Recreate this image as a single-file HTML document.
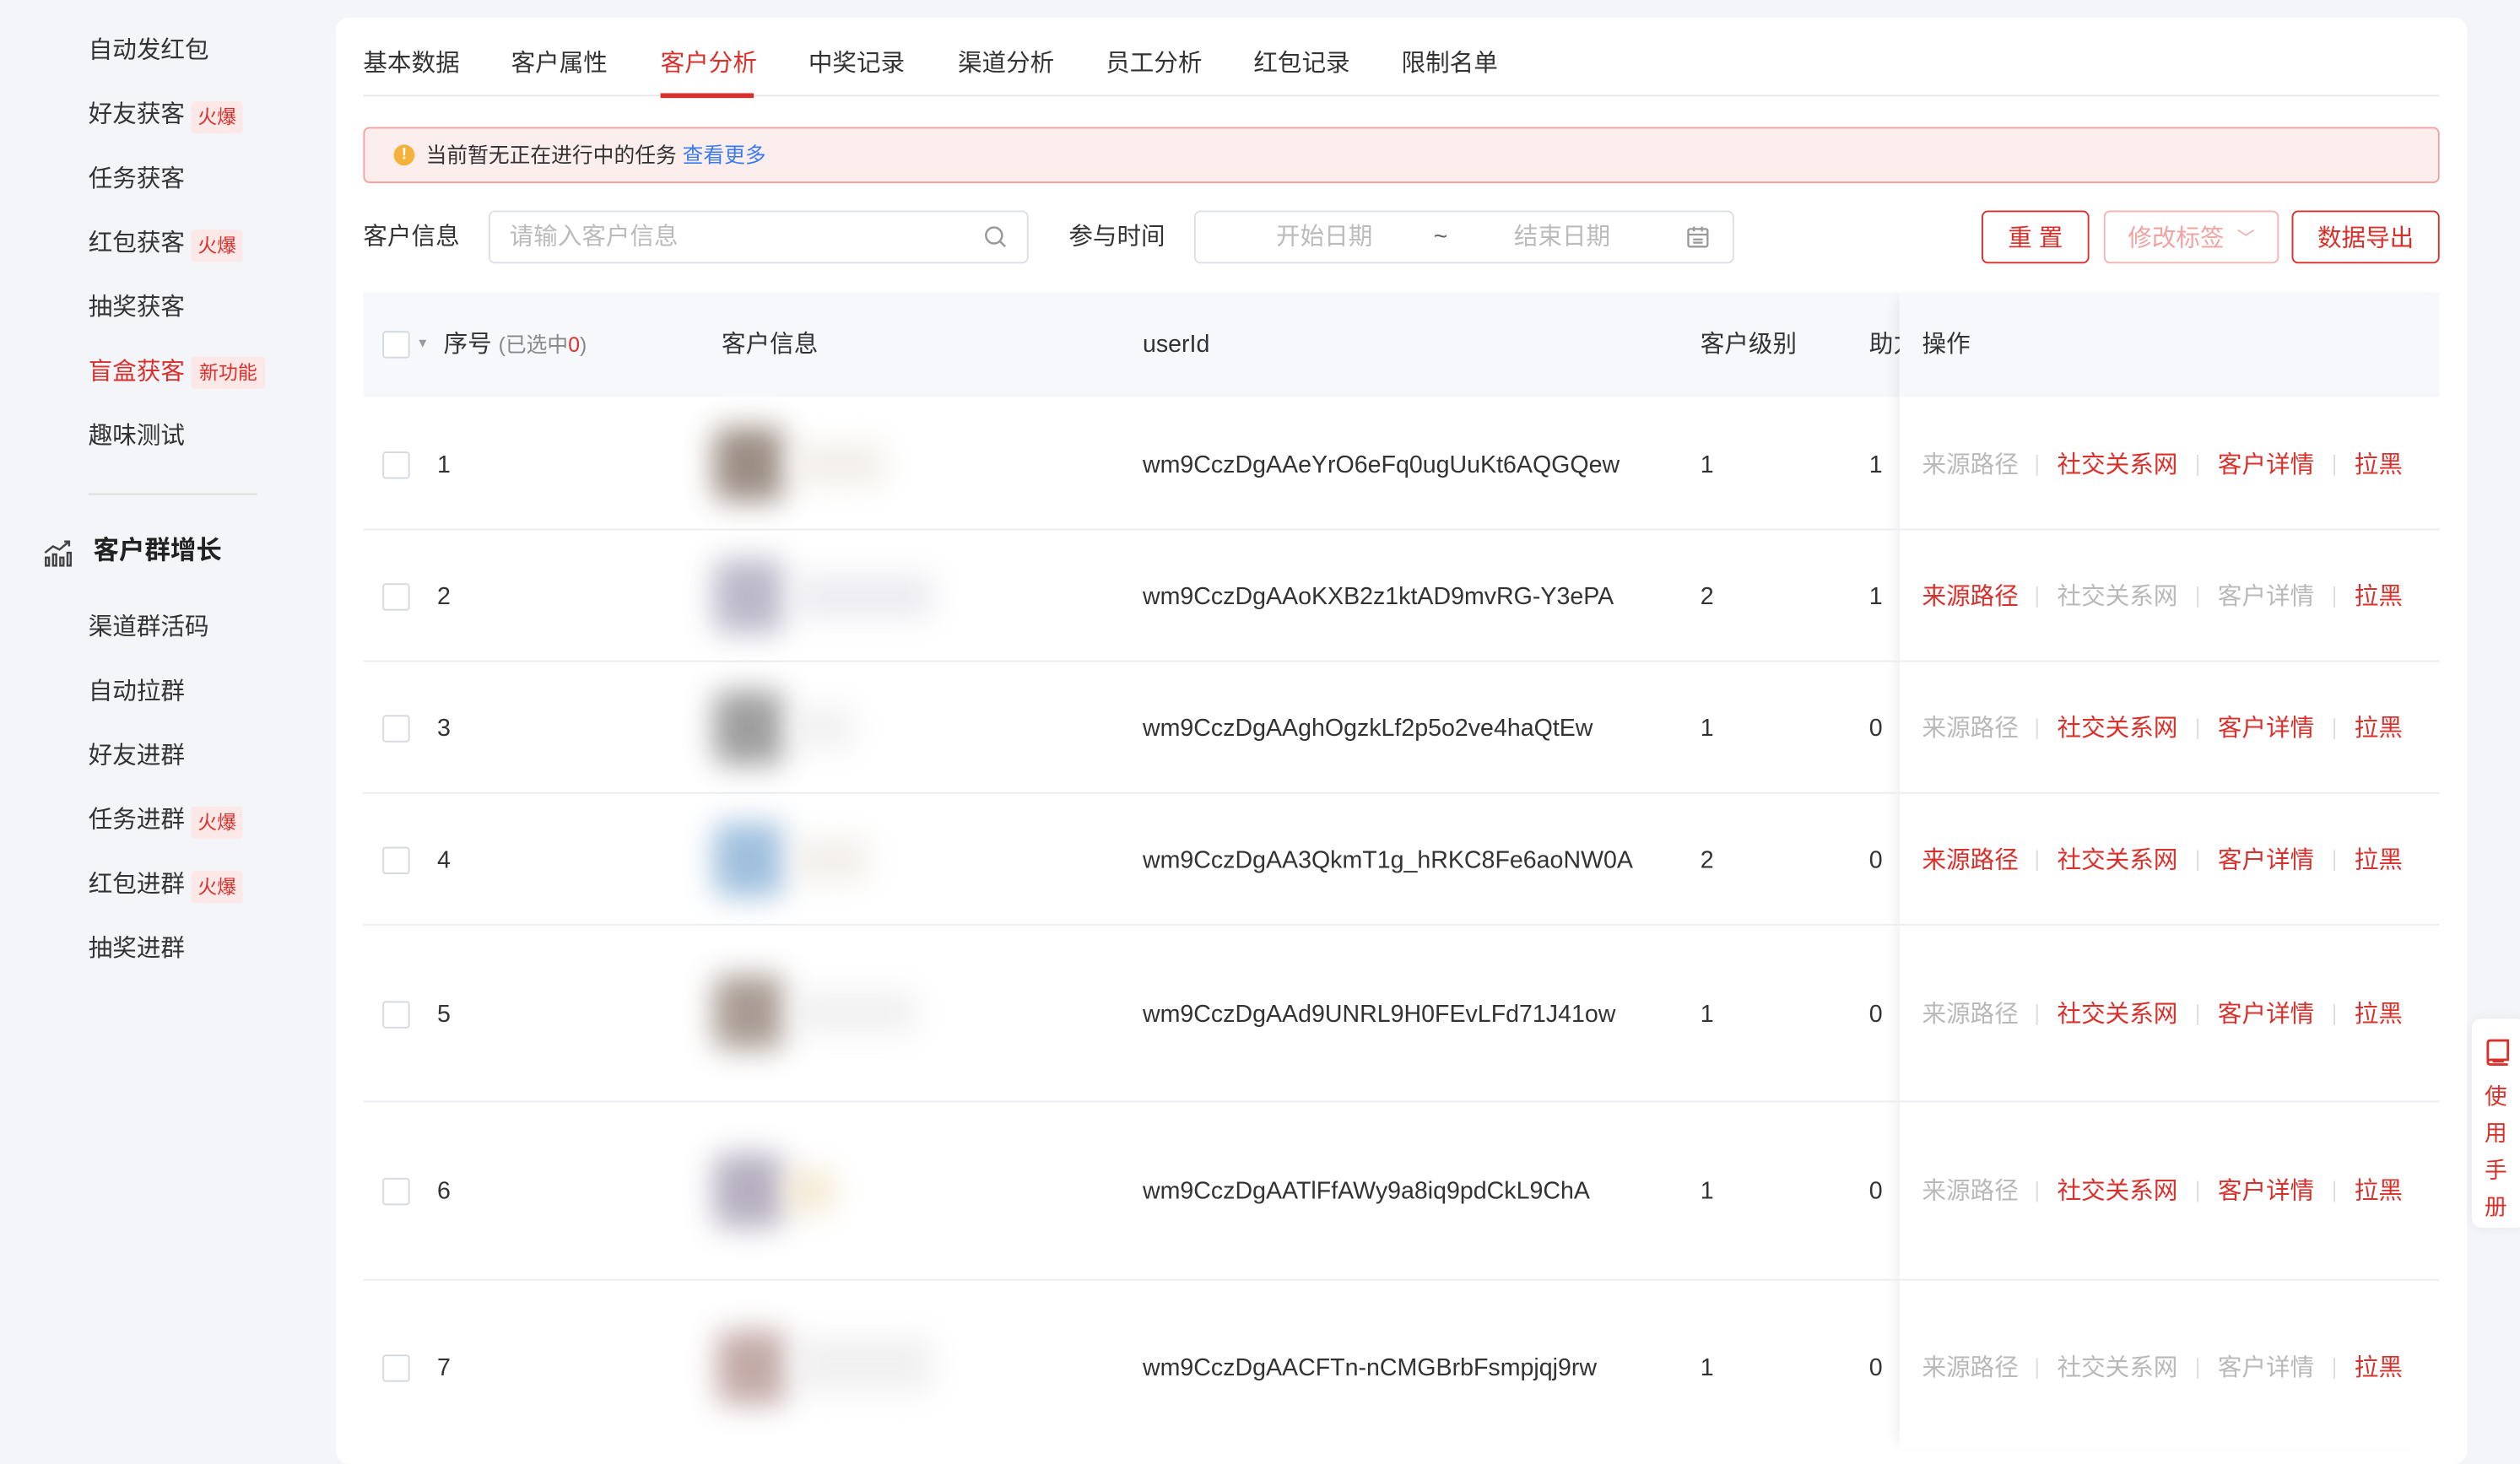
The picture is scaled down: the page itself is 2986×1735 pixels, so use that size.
<!DOCTYPE html>
<html><head><meta charset="utf-8"><style>
*{margin:0;padding:0;box-sizing:border-box}
html,body{width:2986px;height:1714px;overflow:hidden;background:#f4f5f9}
#w{position:absolute;left:0;top:0;width:1568px;height:900px;transform:scale(1.9043);transform-origin:0 0;font-family:"Liberation Sans","Noto Sans CJK SC",sans-serif;color:#333;font-size:15px}
.a{position:absolute;white-space:nowrap;line-height:1}
.tag{position:absolute;white-space:nowrap;background:#fde8e8;color:#d9302b;font-size:12px;padding:4px 4px;border-radius:2px;line-height:1}
.card{position:absolute;left:209px;top:11px;width:1326px;height:900px;background:#fff;border-radius:8px}
.btn{position:absolute;top:131px;height:33px;border:1px solid #d9302b;border-radius:4px;color:#d9302b;font-size:15px;display:flex;align-items:center;justify-content:center}
.cb{position:absolute;left:238px;width:17px;height:17px;border:1px solid #d5d8de;border-radius:2px;background:#fff}
.line{position:absolute;left:226px;width:1292px;height:1px;background:#ebedf0}
.r{color:#d9302b}.g{color:#b9b9b9}
.sep{position:absolute;width:1px;height:13px;background:#ddd}
.av{position:absolute;filter:blur(9px);opacity:.85}
#sb{position:absolute;left:0;top:2px;width:208px;height:700px}
</style></head><body><div id="w">
<div id="sb">
<div class="a" style="left:55px;top:22px">自动发红包</div>
<div class="a" style="left:55px;top:62px">好友获客</div><div class="tag" style="left:119px;top:61px">火爆</div>
<div class="a" style="left:55px;top:102px">任务获客</div>
<div class="a" style="left:55px;top:142px">红包获客</div><div class="tag" style="left:119px;top:141px">火爆</div>
<div class="a" style="left:55px;top:182px">抽奖获客</div>
<div class="a r" style="left:55px;top:222px">盲盒获客</div><div class="tag" style="left:119px;top:220px;padding:4px 5px">新功能</div>
<div class="a" style="left:55px;top:262px">趣味测试</div>
<div style="position:absolute;left:55px;top:305px;width:105px;height:1px;background:#ddd"></div>
<svg style="position:absolute;left:27px;top:334px" width="18" height="17" viewBox="0 0 18 17" fill="none" stroke="#444" stroke-width="1.3"><rect x="1.5" y="11" width="2" height="5"/><rect x="6" y="9" width="2" height="7"/><rect x="10.5" y="11" width="2" height="5"/><rect x="15" y="8" width="2" height="8"/><path d="M1 8 L6 4 L10 6 L16 1 M13 1 H16 V4"/></svg>
<div class="a" style="left:58px;top:334px;font-size:16px;font-weight:bold;color:#222">客户群增长</div>
<div class="a" style="left:55px;top:381px">渠道群活码</div>
<div class="a" style="left:55px;top:421px">自动拉群</div>
<div class="a" style="left:55px;top:461px">好友进群</div>
<div class="a" style="left:55px;top:501px">任务进群</div><div class="tag" style="left:119px;top:500px">火爆</div>
<div class="a" style="left:55px;top:541px">红包进群</div><div class="tag" style="left:119px;top:540px">火爆</div>
<div class="a" style="left:55px;top:581px">抽奖进群</div>
</div>
<div class="card"></div>
<div class="a" style="left:226px;top:32px">基本数据</div>
<div class="a" style="left:318px;top:32px">客户属性</div>
<div class="a r" style="left:411px;top:32px">客户分析</div>
<div class="a" style="left:503px;top:32px">中奖记录</div>
<div class="a" style="left:596px;top:32px">渠道分析</div>
<div class="a" style="left:688px;top:32px">员工分析</div>
<div class="a" style="left:780px;top:32px">红包记录</div>
<div class="a" style="left:872px;top:32px">限制名单</div>
<div style="position:absolute;left:226px;top:59px;width:1292px;height:1px;background:#e8e8e8"></div>
<div style="position:absolute;left:411px;top:58px;width:58px;height:3px;background:#d9302b"></div>
<div style="position:absolute;left:226px;top:79px;width:1292px;height:35px;background:#fdeeee;border:1px solid #f0a3a3;border-radius:4px"></div>
<div style="position:absolute;left:245px;top:90px;width:13px;height:13px;border-radius:50%;background:#f5b23a;color:#fff;font-size:10px;text-align:center;line-height:13px;font-weight:bold">!</div>
<div class="a" style="left:265px;top:90px;font-size:13px">当前暂无正在进行中的任务 <span style="color:#3a7cf0">查看更多</span></div>
<div class="a" style="left:226px;top:140px">客户信息</div>
<div style="position:absolute;left:304px;top:131px;width:336px;height:33px;border:1px solid #dcdfe6;border-radius:4px"></div>
<div class="a" style="left:317px;top:140px;color:#bbb">请输入客户信息</div>
<svg style="position:absolute;left:612px;top:140px" width="15" height="15" viewBox="0 0 15 15" fill="none" stroke="#999" stroke-width="1.3"><circle cx="6.5" cy="6.5" r="5"/><path d="M10 10 L13.5 13.5"/></svg>
<div class="a" style="left:665px;top:140px">参与时间</div>
<div style="position:absolute;left:743px;top:131px;width:336px;height:33px;border:1px solid #dcdfe6;border-radius:4px"></div>
<div class="a" style="left:794px;top:140px;color:#bbb">开始日期</div>
<div class="a" style="left:892px;top:140px;color:#666">~</div>
<div class="a" style="left:942px;top:140px;color:#bbb">结束日期</div>
<svg style="position:absolute;left:1049px;top:140px" width="15" height="15" viewBox="0 0 15 15" fill="none" stroke="#999" stroke-width="1.2"><rect x="1.5" y="2.5" width="12" height="11" rx="1"/><path d="M1.5 6 H13.5 M5 1 V4 M10 1 V4 M4.5 9 H10.5 M4.5 11 H10.5"/></svg>
<div class="btn" style="left:1233px;width:67px">重 置</div>
<div class="btn" style="left:1309px;width:109px;border-color:#f3b4b4;color:#f0a3a3">修改标签 <span style="font-size:11px;margin-left:8px">﹀</span></div>
<div class="btn" style="left:1426px;width:92px">数据导出</div>
<div style="position:absolute;left:226px;top:182px;width:1292px;height:65px;background:#f7f8fc"></div>
<div class="cb" style="top:206px"></div>
<div class="a" style="left:259px;top:210px;font-size:8px;color:#999">▼</div>
<div class="a" style="left:276px;top:207px">序号 <span style="font-size:13px;color:#888">(已选中<span class="r">0</span>)</span></div>
<div class="a" style="left:449px;top:207px">客户信息</div>
<div class="a" style="left:711px;top:207px">userId</div>
<div class="a" style="left:1058px;top:207px">客户级别</div>
<div class="a" style="left:1163px;top:207px">助力</div>
<div style="position:absolute;left:1182px;top:182px;width:336px;height:720px;background:#fff;box-shadow:-6px 0 8px -4px rgba(0,0,0,0.07)"></div>
<div style="position:absolute;left:1182px;top:182px;width:336px;height:65px;background:#f7f8fc"></div>
<div class="a" style="left:1196px;top:207px">操作</div>
<div class="line" style="top:329px"></div><div class="line" style="top:411px"></div><div class="line" style="top:493px"></div><div class="line" style="top:575px"></div><div class="line" style="top:685px"></div><div class="line" style="top:796px"></div>
<div class="cb" style="top:281px"></div><div class="a" style="left:272px;top:282px">1</div>
<div class="av" style="left:444px;top:266px;width:44px;height:46px;border-radius:8px;background:#8a7a6f"></div><div class="av" style="left:495px;top:276px;width:55px;height:26px;background:#f0ece6"></div>
<div class="a" style="left:711px;top:282px">wm9CczDgAAeYrO6eFq0ugUuKt6AQGQew</div><div class="a" style="left:1058px;top:282px">1</div><div class="a" style="left:1163px;top:282px">1</div>
<div class="cb" style="top:363px"></div><div class="a" style="left:272px;top:364px">2</div>
<div class="av" style="left:444px;top:348px;width:44px;height:46px;border-radius:8px;background:#b0adc0"></div><div class="av" style="left:495px;top:358px;width:85px;height:26px;background:#e8e8ee"></div>
<div class="a" style="left:711px;top:364px">wm9CczDgAAoKXB2z1ktAD9mvRG-Y3ePA</div><div class="a" style="left:1058px;top:364px">2</div><div class="a" style="left:1163px;top:364px">1</div>
<div class="cb" style="top:445px"></div><div class="a" style="left:272px;top:446px">3</div>
<div class="av" style="left:444px;top:430px;width:44px;height:46px;border-radius:8px;background:#8e8e8e"></div><div class="av" style="left:495px;top:440px;width:35px;height:26px;background:#eee"></div>
<div class="a" style="left:711px;top:446px">wm9CczDgAAghOgzkLf2p5o2ve4haQtEw</div><div class="a" style="left:1058px;top:446px">1</div><div class="a" style="left:1163px;top:446px">0</div>
<div class="cb" style="top:527px"></div><div class="a" style="left:272px;top:528px">4</div>
<div class="av" style="left:444px;top:512px;width:44px;height:46px;border-radius:8px;background:#8fb5d8"></div><div class="av" style="left:495px;top:522px;width:45px;height:26px;background:#f0ece6"></div>
<div class="a" style="left:711px;top:528px">wm9CczDgAA3QkmT1g_hRKC8Fe6aoNW0A</div><div class="a" style="left:1058px;top:528px">2</div><div class="a" style="left:1163px;top:528px">0</div>
<div class="cb" style="top:623px"></div><div class="a" style="left:272px;top:624px">5</div>
<div class="av" style="left:444px;top:607px;width:44px;height:46px;border-radius:8px;background:#9a8a80"></div><div class="av" style="left:495px;top:617px;width:75px;height:26px;background:#eee"></div>
<div class="a" style="left:711px;top:624px">wm9CczDgAAd9UNRL9H0FEvLFd71J41ow</div><div class="a" style="left:1058px;top:624px">1</div><div class="a" style="left:1163px;top:624px">0</div>
<div class="cb" style="top:733px"></div><div class="a" style="left:272px;top:734px">6</div>
<div class="av" style="left:444px;top:718px;width:44px;height:46px;border-radius:8px;background:#a9a2b5"></div><div class="av" style="left:490px;top:728px;width:28px;height:26px;background:#f2e5c8"></div>
<div class="a" style="left:711px;top:734px">wm9CczDgAATlFfAWy9a8iq9pdCkL9ChA</div><div class="a" style="left:1058px;top:734px">1</div><div class="a" style="left:1163px;top:734px">0</div>
<div class="cb" style="top:843px"></div><div class="a" style="left:272px;top:844px">7</div>
<div class="av" style="left:446px;top:828px;width:44px;height:46px;border-radius:8px;background:#b89c98"></div><div class="av" style="left:495px;top:832px;width:85px;height:34px;background:#eee"></div>
<div class="a" style="left:711px;top:844px">wm9CczDgAACFTn-nCMGBrbFsmpjqj9rw</div><div class="a" style="left:1058px;top:844px">1</div><div class="a" style="left:1163px;top:844px">0</div>
<div style="position:absolute;left:0;top:282px"><div class="a g" style="left:1196px">来源路径</div><div class="sep" style="left:1267px;top:1px"></div><div class="a r" style="left:1280px">社交关系网</div><div class="sep" style="left:1367px;top:1px"></div><div class="a r" style="left:1380px">客户详情</div><div class="sep" style="left:1452px;top:1px"></div><div class="a r" style="left:1465px">拉黑</div></div>
<div style="position:absolute;left:0;top:364px"><div class="a r" style="left:1196px">来源路径</div><div class="sep" style="left:1267px;top:1px"></div><div class="a g" style="left:1280px">社交关系网</div><div class="sep" style="left:1367px;top:1px"></div><div class="a g" style="left:1380px">客户详情</div><div class="sep" style="left:1452px;top:1px"></div><div class="a r" style="left:1465px">拉黑</div></div>
<div style="position:absolute;left:0;top:446px"><div class="a g" style="left:1196px">来源路径</div><div class="sep" style="left:1267px;top:1px"></div><div class="a r" style="left:1280px">社交关系网</div><div class="sep" style="left:1367px;top:1px"></div><div class="a r" style="left:1380px">客户详情</div><div class="sep" style="left:1452px;top:1px"></div><div class="a r" style="left:1465px">拉黑</div></div>
<div style="position:absolute;left:0;top:528px"><div class="a r" style="left:1196px">来源路径</div><div class="sep" style="left:1267px;top:1px"></div><div class="a r" style="left:1280px">社交关系网</div><div class="sep" style="left:1367px;top:1px"></div><div class="a r" style="left:1380px">客户详情</div><div class="sep" style="left:1452px;top:1px"></div><div class="a r" style="left:1465px">拉黑</div></div>
<div style="position:absolute;left:0;top:624px"><div class="a g" style="left:1196px">来源路径</div><div class="sep" style="left:1267px;top:1px"></div><div class="a r" style="left:1280px">社交关系网</div><div class="sep" style="left:1367px;top:1px"></div><div class="a r" style="left:1380px">客户详情</div><div class="sep" style="left:1452px;top:1px"></div><div class="a r" style="left:1465px">拉黑</div></div>
<div style="position:absolute;left:0;top:734px"><div class="a g" style="left:1196px">来源路径</div><div class="sep" style="left:1267px;top:1px"></div><div class="a r" style="left:1280px">社交关系网</div><div class="sep" style="left:1367px;top:1px"></div><div class="a r" style="left:1380px">客户详情</div><div class="sep" style="left:1452px;top:1px"></div><div class="a r" style="left:1465px">拉黑</div></div>
<div style="position:absolute;left:0;top:844px"><div class="a g" style="left:1196px">来源路径</div><div class="sep" style="left:1267px;top:1px"></div><div class="a g" style="left:1280px">社交关系网</div><div class="sep" style="left:1367px;top:1px"></div><div class="a g" style="left:1380px">客户详情</div><div class="sep" style="left:1452px;top:1px"></div><div class="a r" style="left:1465px">拉黑</div></div>
<div style="position:absolute;left:1538px;top:634px;width:34px;height:130px;background:#fff;border-radius:6px;box-shadow:0 0 8px rgba(0,0,0,0.06)"></div>
<svg style="position:absolute;left:1545px;top:646px" width="18" height="18" viewBox="0 0 18 18" fill="none" stroke="#d9302b" stroke-width="1.5"><path d="M3 14 V3 Q3 1.5 4.5 1.5 H15.5 V13.5 H5 Q3 13.5 3 15 Q3 16.5 5 16.5 H15.5"/><path d="M6 14.5 H13"/></svg>
<div class="a r" style="left:1546px;top:671px;font-size:14px;line-height:23px;white-space:normal;width:14px">使用手册</div>
</div></body></html>
